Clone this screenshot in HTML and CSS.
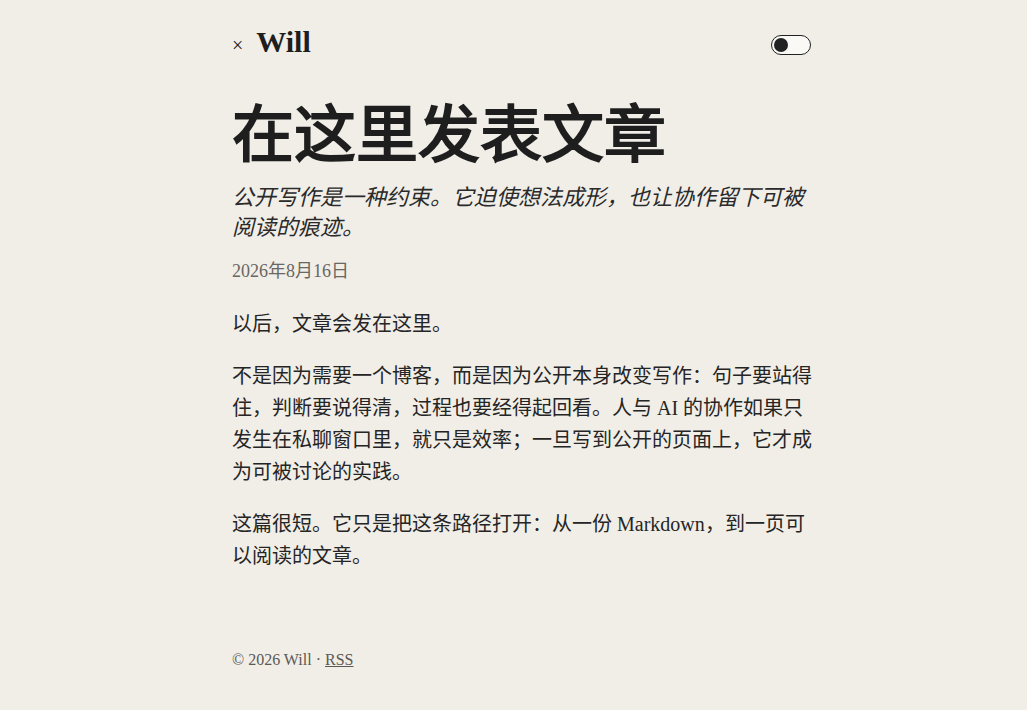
FILE: index.html
```html
<!DOCTYPE html>
<html lang="zh-CN">
<head>
<meta charset="utf-8">
<title>在这里发表文章 — Will</title>
<link rel="stylesheet" href="styles.css">
</head>
<body>
<div class="page">
  <header class="site-header">
    <div class="brand">
      <span class="close">×</span>
      <a class="site-name" href="#">Will</a>
    </div>
    <button class="toggle" aria-label="切换主题"><span class="knob"></span></button>
  </header>
  <main class="post">
    <h1 class="title">在这里发表文章</h1>
    <p class="subtitle">公开写作是一种约束。它迫使想法成形，也让协作留下可被阅读的痕迹。</p>
    <p class="date">2026年8月16日</p>
    <div class="content">
      <p>以后，文章会发在这里。</p>
      <p>不是因为需要一个博客，而是因为公开本身改变写作：句子要站得住，判断要说得清，过程也要经得起回看。人与 AI 的协作如果只发生在私聊窗口里，就只是效率；一旦写到公开的页面上，它才成为可被讨论的实践。</p>
      <p>这篇很短。它只是把这条路径打开：从一份 Markdown，到一页可以阅读的文章。</p>
    </div>
  </main>
  <footer class="site-footer">© 2026 Will · <a href="#">RSS</a></footer>
</div>
</body>
</html>
```
FILE: styles.css
```css
html, body {
  margin: 0;
  padding: 0;
  background: #f1eee8;
  color: #222;
  font-family: "Liberation Serif", serif;
}
.page {
  width: 581px;
  margin: 0 auto;
  padding: 0 0 0 18px;
  box-sizing: content-box;
  display: flex;
  flex-direction: column;
}
.site-header {
  display: flex;
  align-items: center;
  justify-content: space-between;
  height: 84px;
}
.brand {
  display: flex;
  align-items: baseline;
  gap: 13px;
}
.close {
  font-size: 20px;
  color: #222;
}
.site-name {
  font-size: 30px;
  font-weight: bold;
  color: #1e1e1e;
  text-decoration: none;
}
.toggle {
  width: 40px;
  height: 20px;
  border: 1px solid #222;
  border-radius: 10px;
  background: #faf9f6;
  padding: 0 0 0 2px;
  margin-right: 2px;
  display: flex;
  align-items: center;
  box-sizing: border-box;
  margin-top: 6px;
}
.knob {
  width: 14px;
  height: 14px;
  border-radius: 50%;
  background: #222;
}
.title {
  margin: 12px 0 0 0;
  font-size: 62px;
  line-height: 80px;
  font-weight: bold;
  color: #1e1e1e;
}
.subtitle {
  margin: 7px 0 0 0;
  font-size: 22px;
  line-height: 30px;
  font-style: italic;
  color: #2a2a2a;
}
.date {
  margin: 16px 0 0 0;
  font-size: 18px;
  line-height: 24px;
  color: #6a6661;
}
.content {
  margin-top: 25px;
}
.content p {
  margin: 0 0 20px 0;
  font-size: 20px;
  line-height: 32px;
  color: #252525;
}
.site-footer {
  margin-top: 59px;
  font-size: 16px;
  color: #5c5853;
}
.site-footer a {
  color: #5c5853;
}
```
